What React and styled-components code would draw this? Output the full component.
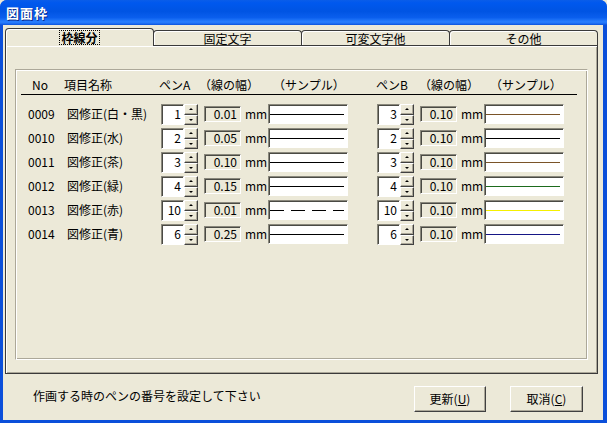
import styled, { createGlobalStyle } from "styled-components";

const GlobalStyle = createGlobalStyle`
  html, body {
    margin: 0;
    padding: 0;
    background: #ece9d8;
  }
  body {
    font-family: "Noto Sans CJK JP", "Noto Sans", sans-serif;
    font-size: 12px;
    color: #000;
  }
  * {
    box-sizing: border-box;
  }
`;

const ROWS = [
  { no: "0009", name: "図修正(白・黒)", a: { pen: 1, w: "0.01", color: "#000" }, b: { pen: 3, w: "0.10", color: "#7a5428" } },
  { no: "0010", name: "図修正(水)", a: { pen: 2, w: "0.05", color: "#000" }, b: { pen: 2, w: "0.10", color: "#000" } },
  { no: "0011", name: "図修正(茶)", a: { pen: 3, w: "0.10", color: "#000" }, b: { pen: 3, w: "0.10", color: "#7a5428" } },
  { no: "0012", name: "図修正(緑)", a: { pen: 4, w: "0.15", color: "#000" }, b: { pen: 4, w: "0.10", color: "#1d6b1d" } },
  { no: "0013", name: "図修正(赤)", a: { pen: 10, w: "0.01", color: "#000", dashed: true }, b: { pen: 10, w: "0.10", color: "#f5f000" } },
  { no: "0014", name: "図修正(青)", a: { pen: 6, w: "0.25", color: "#000" }, b: { pen: 6, w: "0.10", color: "#161686" } },
];

const TABS = [
  { label: "枠線分", active: true },
  { label: "固定文字" },
  { label: "可変文字他" },
  { label: "その他" },
];

const Window = styled.div`
  width: 607px;
  height: 423px;
  display: flex;
  flex-direction: column;
  background: #0b4fda;
  border-radius: 7px 7px 0 0;
  overflow: hidden;
`;

const TitleBar = styled.div`
  flex: 0 0 25px;
  display: flex;
  align-items: center;
  padding-left: 6px;
  background: linear-gradient(
    180deg,
    #0a5de9 0%,
    #0058ee 12%,
    #0054e3 45%,
    #0a5eed 70%,
    #2a80ff 88%,
    #1766ee 96%,
    #0a4fd8 100%
  );
  color: #fff;
  font-weight: bold;
  font-size: 13px;
  letter-spacing: 1px;
  text-shadow: 1px 1px 0 #0b2a8a;
`;

const Client = styled.div`
  flex: 1;
  margin: 0 4px 3px 3px;
  padding: 3px 5px 0 2px;
  background: #ece9d8;
  display: flex;
  flex-direction: column;
`;

const TabStrip = styled.div`
  flex: 0 0 17px;
  display: flex;
  align-items: flex-end;
`;

const Tab = styled.div`
  width: 149px;
  height: ${(p) => (p.$active ? 18 : 15)}px;
  margin-bottom: ${(p) => (p.$active ? -1 : 0)}px;
  margin-left: ${(p) => (p.$first ? 0 : -1)}px;
  position: relative;
  z-index: ${(p) => (p.$active ? 2 : 0)};
  border: 1px solid #3a3a3a;
  border-bottom: none;
  border-radius: 4px 4px 0 0;
  box-shadow: inset 1px 1px 0 #fff;
  background: #ece9d8;
  display: flex;
  align-items: center;
  justify-content: center;
  line-height: 13px;
  font-weight: ${(p) => (p.$active ? "bold" : "normal")};
`;

const FocusLabel = styled.span`
  padding: 0 1px;
  outline: 1px dotted #000;
  outline-offset: 0;
`;

const Panel = styled.div`
  flex: 0 0 329px;
  position: relative;
  z-index: 1;
  display: flex;
  border: 1px solid #3a3a3a;
  box-shadow: inset 1px 1px 0 #fff, inset -1px -1px 0 #aca899;
  padding: 23px 9px 13px 9px;
`;

const Group = styled.div`
  flex: 1;
  border: 1px solid;
  border-color: #aca899 #fff #fff #aca899;
  box-shadow: inset 1px 1px 0 #fff, inset -1px -1px 0 #aca899;
  padding: 0 10px 0 5px;
`;

const Header = styled.div`
  height: 25px;
  display: flex;
  padding: 8px 0 0 11px;
  border-bottom: 1px solid #000;
  line-height: 14px;
  white-space: nowrap;
`;

const HeadCell = styled.div`
  width: ${(p) => p.$w}px;
  flex: 0 0 auto;
`;

const Rows = styled.div`
  margin-top: 9px;
  padding-left: 7px;
  display: flex;
  flex-direction: column;
`;

const Row = styled.div`
  height: 24px;
  display: flex;
  align-items: flex-start;
`;

const TextCell = styled.div`
  width: ${(p) => p.$w}px;
  flex: 0 0 auto;
  line-height: 19px;
  white-space: nowrap;
`;

const PenBlock = styled.div`
  display: flex;
  align-items: flex-start;
  margin-left: ${(p) => p.$gap || 0}px;
`;

const EditBox = styled.div`
  width: 23px;
  height: 21px;
  border: 1px solid;
  border-color: #8a887c #fff #fff #8a887c;
  box-shadow: inset 1px 1px 0 #4a4a44;
  background: #fff;
  text-align: right;
  padding-right: 2px;
  line-height: 18px;
`;

const Spinner = styled.div`
  width: 14px;
  height: 21px;
  display: flex;
  flex-direction: column;
`;

const SpinButton = styled.div`
  flex: 1;
  display: flex;
  align-items: center;
  justify-content: center;
  background: #ece9d8;
  border: 1px solid;
  border-color: #fff #404040 #404040 #fff;
  box-shadow: inset -1px -1px 0 #aca899;

  &::after {
    content: "";
    width: 0;
    height: 0;
    border-left: 2px solid transparent;
    border-right: 2px solid transparent;
    ${(p) =>
      p.$down ? "border-top: 2px solid #000;" : "border-bottom: 2px solid #000;"}
  }
`;

const WidthField = styled.div`
  width: 37px;
  height: 16px;
  margin: 2px 0 0 6px;
  border: 1px solid;
  border-color: #8a887c #fff #fff #8a887c;
  box-shadow: inset 1px 1px 0 #4a4a44;
  background: #ece9d8;
  text-align: right;
  padding-right: 3px;
  line-height: 14px;
`;

const Unit = styled.div`
  width: 27px;
  padding-left: 4px;
  line-height: 19px;
`;

const Sample = styled.div`
  width: 80px;
  height: 20px;
  border: 1px solid;
  border-color: #8a887c #fff #fff #8a887c;
  box-shadow: inset 1px 1px 0 #4a4a44;
  background: #fff;
  display: flex;
  align-items: center;
  padding: 0 3px 0 1px;
`;

const SampleLine = styled.div`
  flex: 1;
  height: 1px;
  background: ${(p) =>
    p.$dashed
      ? `repeating-linear-gradient(to right, ${p.$color} 0 14px, transparent 14px 21px)`
      : p.$color};
`;

const Footer = styled.div`
  flex: 1;
  display: flex;
  align-items: flex-start;
  padding: 12px 15px 0 28px;
`;

const Status = styled.div`
  flex: 1;
  line-height: 20px;
`;

const Button = styled.button`
  width: ${(p) => p.$w}px;
  height: 26px;
  margin-left: ${(p) => p.$gap || 0}px;
  padding: 0;
  font: inherit;
  color: #000;
  background: #ece9d8;
  border: 1px solid;
  border-color: #fff #404040 #404040 #fff;
  box-shadow: inset -1px -1px 0 #aca899;
  line-height: 22px;
`;

function Pen({ pen, gap }) {
  return (
    <PenBlock $gap={gap}>
      <EditBox>{pen.pen}</EditBox>
      <Spinner>
        <SpinButton />
        <SpinButton $down />
      </Spinner>
      <WidthField>{pen.w}</WidthField>
      <Unit>mm</Unit>
      <Sample>
        <SampleLine $color={pen.color} $dashed={pen.dashed} />
      </Sample>
    </PenBlock>
  );
}

export default function App() {
  return (
    <>
      <GlobalStyle />
      <Window>
        <TitleBar>図面枠</TitleBar>
        <Client>
          <TabStrip>
            {TABS.map((t, i) => (
              <Tab key={t.label} $active={t.active} $first={i === 0}>
                {t.active ? <FocusLabel>{t.label}</FocusLabel> : t.label}
              </Tab>
            ))}
          </TabStrip>
          <Panel>
            <Group>
              <Header>
                <HeadCell $w={32}>No</HeadCell>
                <HeadCell $w={95}>項目名称</HeadCell>
                <HeadCell $w={40}>ペンA</HeadCell>
                <HeadCell $w={74}>（線の幅）</HeadCell>
                <HeadCell $w={103}>（サンプル）</HeadCell>
                <HeadCell $w={43}>ペンB</HeadCell>
                <HeadCell $w={71}>（線の幅）</HeadCell>
                <HeadCell $w={80}>（サンプル）</HeadCell>
              </Header>
              <Rows>
                {ROWS.map((r) => (
                  <Row key={r.no}>
                    <TextCell $w={39}>{r.no}</TextCell>
                    <TextCell $w={94}>{r.name}</TextCell>
                    <Pen pen={r.a} />
                    <Pen pen={r.b} gap={29} />
                  </Row>
                ))}
              </Rows>
            </Group>
          </Panel>
          <Footer>
            <Status>作画する時のペンの番号を設定して下さい</Status>
            <Button $w={72}>
              更新(<u>U</u>)
            </Button>
            <Button $w={73} $gap={24}>
              取消(<u>C</u>)
            </Button>
          </Footer>
        </Client>
      </Window>
    </>
  );
}
